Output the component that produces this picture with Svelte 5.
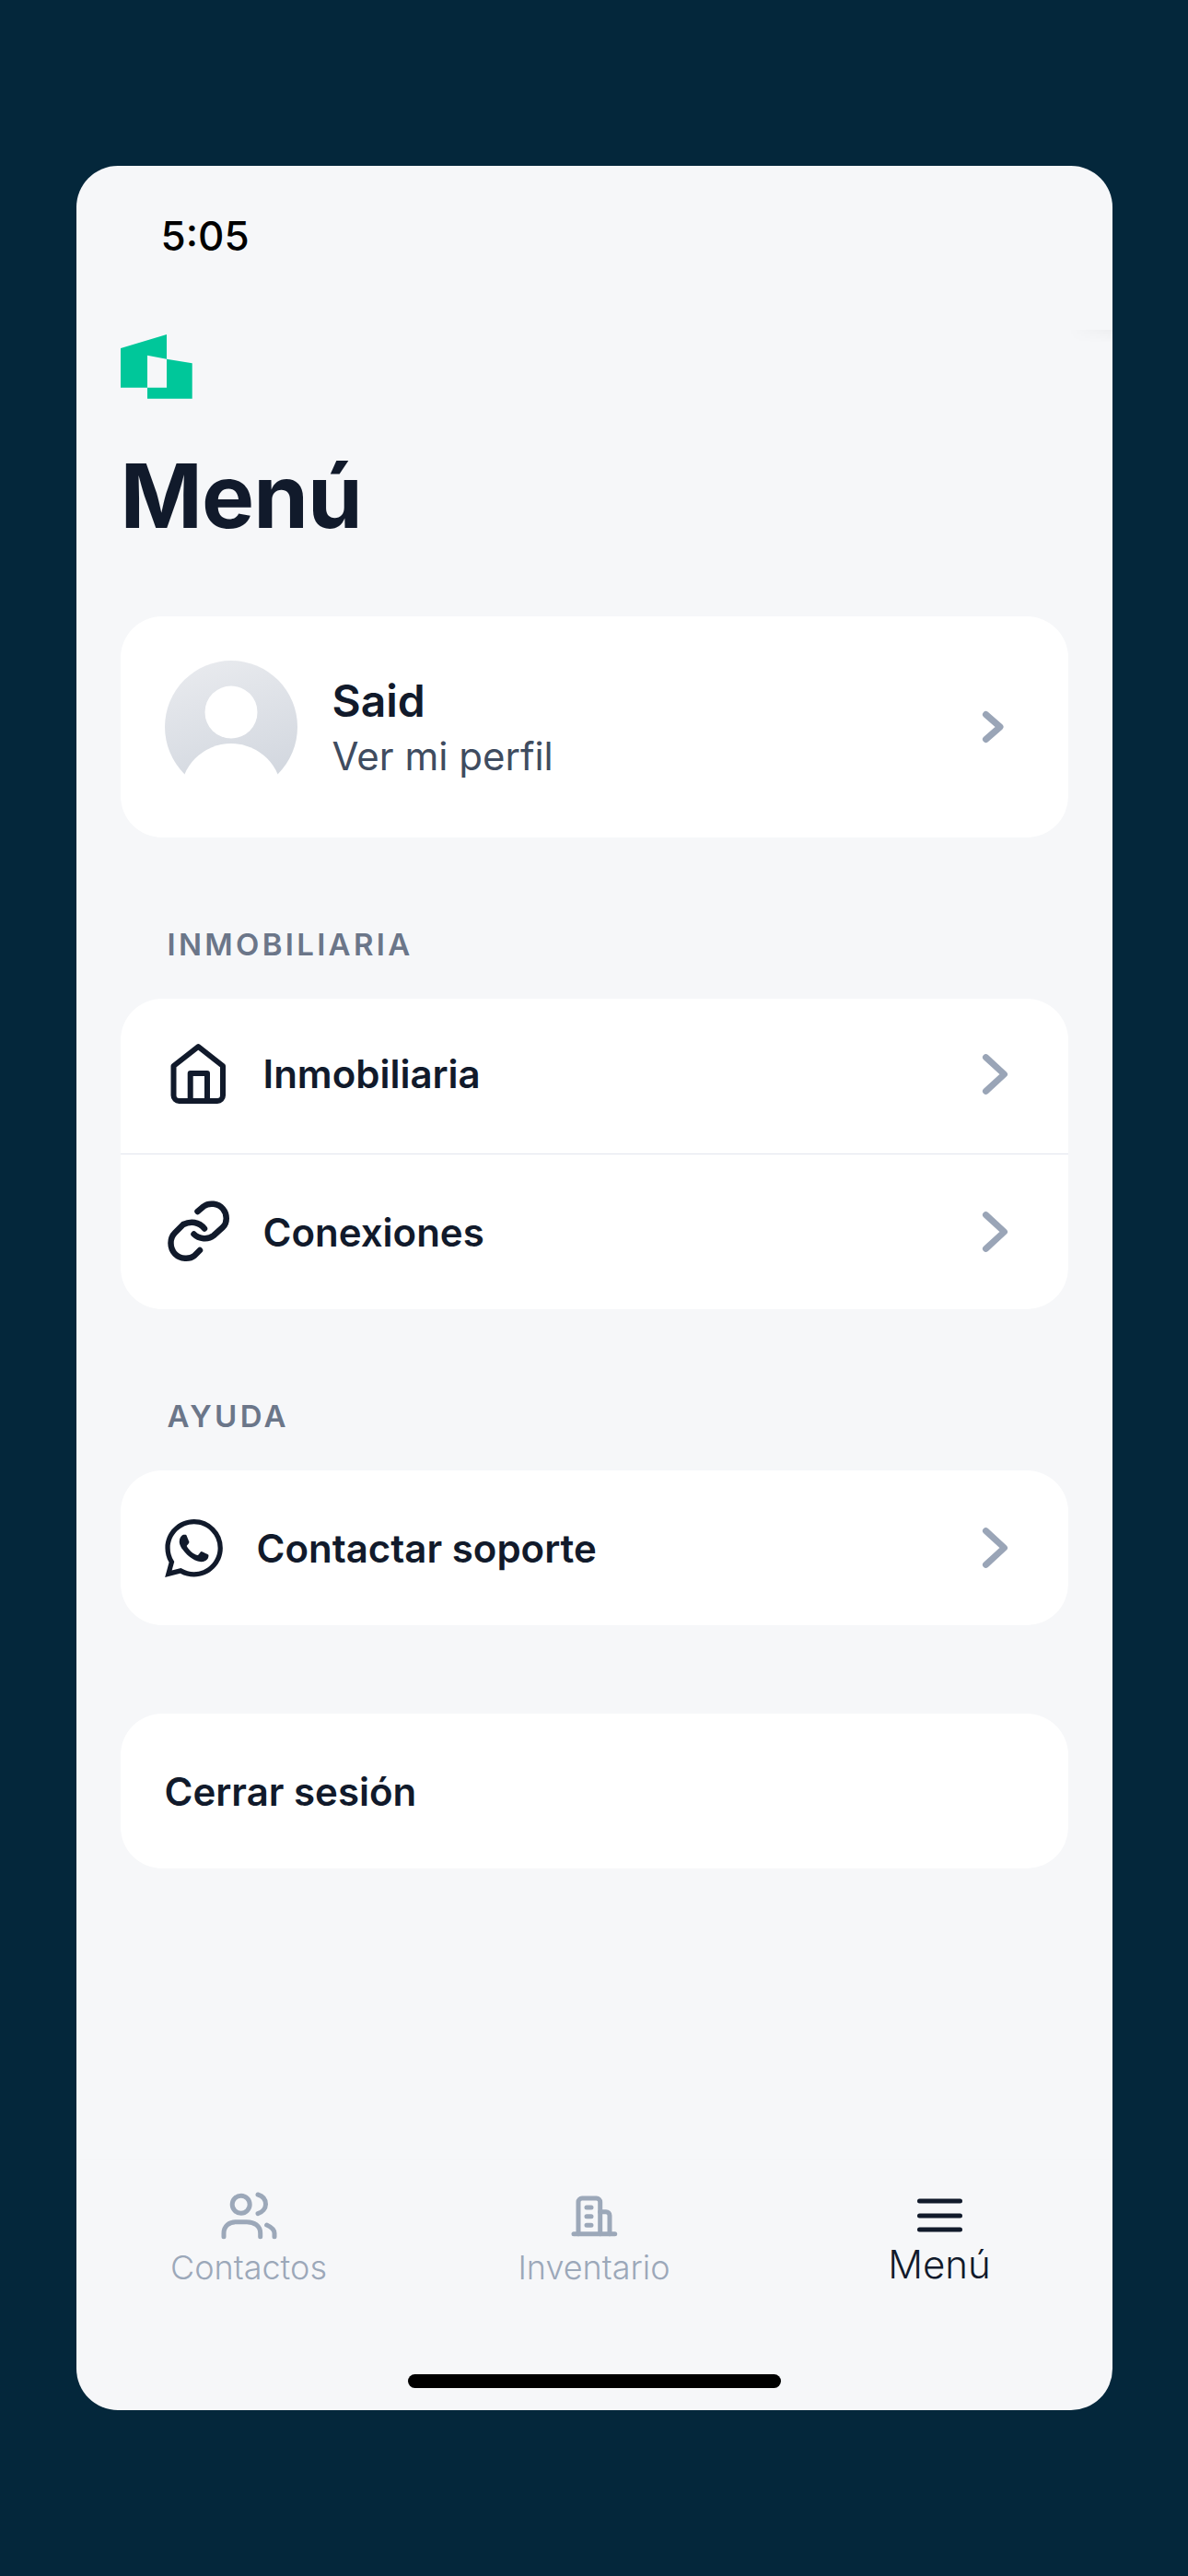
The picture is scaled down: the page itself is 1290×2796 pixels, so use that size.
<script>
  const wa = "M17.472 14.382c-.297-.149-1.758-.867-2.03-.967-.273-.099-.471-.148-.67.15-.197.297-.767.966-.94 1.164-.173.199-.347.223-.644.075-.297-.15-1.255-.463-2.39-1.475-.883-.788-1.48-1.761-1.653-2.059-.173-.297-.018-.458.13-.606.134-.133.298-.347.446-.52.149-.174.198-.298.298-.497.099-.198.05-.371-.025-.52-.075-.149-.669-1.612-.916-2.207-.242-.579-.487-.5-.669-.51-.173-.008-.371-.01-.57-.01-.198 0-.52.074-.792.372-.272.297-1.04 1.016-1.04 2.479 0 1.462 1.065 2.875 1.213 3.074.149.198 2.096 3.2 5.077 4.487.709.306 1.262.489 1.694.625.712.227 1.36.195 1.871.118.571-.085 1.758-.719 2.006-1.413.248-.694.248-1.289.173-1.413-.074-.124-.272-.198-.57-.347m-5.421 7.403h-.004a9.87 9.87 0 01-5.031-1.378l-.361-.214-3.741.982.998-3.648-.235-.374a9.86 9.86 0 01-1.51-5.26c.001-5.45 4.436-9.884 9.888-9.884 2.64 0 5.122 1.03 6.988 2.898a9.825 9.825 0 012.893 6.994c-.003 5.45-4.437 9.884-9.885 9.884m8.413-18.297A11.815 11.815 0 0012.05 0C5.495 0 .16 5.335.157 11.892c0 2.096.547 4.142 1.588 5.945L.057 24l6.305-1.654a11.882 11.882 0 005.683 1.448h.005c6.554 0 11.89-5.335 11.893-11.893a11.821 11.821 0 00-3.48-8.413z";
</script>

{#snippet chevron()}
  <svg class="chev" viewBox="0 0 40 60" fill="none" stroke="currentColor" stroke-width="7" stroke-linecap="round" stroke-linejoin="round"><path d="M9.5 11.7 29.5 30 9.5 48.3" /></svg>
{/snippet}

<div class="phone">
  <div class="fade"></div>
  <div class="status">5:05</div>

  <svg class="logo" viewBox="0 0 78 70" fill="#00c79a">
    <polygon points="0,15 50,0 50,26.7 29,22.7 29,57.7 0,57.7" />
    <polygon points="50,26.7 77.7,31.3 77.7,69.7 29,69.7 29,57.7 50,57.7" />
  </svg>

  <h1>Menú</h1>

  <section class="card profile">
    <svg class="avatar" viewBox="0 0 144 144">
      <defs>
        <linearGradient id="av" x1="0.3" y1="0" x2="0.6" y2="1">
          <stop offset="0" stop-color="#e8eaee" />
          <stop offset="1" stop-color="#d1d6de" />
        </linearGradient>
      </defs>
      <circle cx="72" cy="72" r="72" fill="url(#av)" />
      <circle cx="72" cy="56" r="28.5" fill="#fff" />
      <circle cx="72" cy="145" r="55" fill="#fff" />
    </svg>
    <div class="who">
      <div class="name">Said</div>
      <div class="sub">Ver mi perfil</div>
    </div>
    <svg class="chev small" viewBox="0 0 40 60" fill="none" stroke="currentColor" stroke-width="7" stroke-linecap="round" stroke-linejoin="round"><path d="M9.5 16.5 25 30 9.5 43.5" /></svg>
  </section>

  <h2>INMOBILIARIA</h2>
  <section class="card">
    <div class="row first">
      <svg class="ico" viewBox="0 0 72 72" fill="none" stroke="#111a2b" stroke-width="6" stroke-linecap="round" stroke-linejoin="round">
        <path d="M9.5 27 36.3 6 63 27V59a6 6 0 0 1-6 6H15.5a6 6 0 0 1-6-6Z" />
        <path d="M27.7 65V35H46V65" />
      </svg>
      <span class="label">Inmobiliaria</span>
      {@render chevron()}
    </div>
    <div class="row">
      <svg class="ico" viewBox="18 21 72 72" fill="none" stroke="#111a2b" stroke-width="6.5" stroke-linecap="round" stroke-linejoin="round">
        <path d="M53.5 35 60 29.5C66 25 76 26 81 32 86 38 86 47 81 52L71 61C65 66 55 65 49.5 59.5" />
        <path d="M61 53.5C55 46 46 45 38 49L29 58C23 64 23 74 29 81 35 87 45 87 50 83L56 77" />
      </svg>
      <span class="label">Conexiones</span>
      {@render chevron()}
    </div>
  </section>

  <h2>AYUDA</h2>
  <section class="card">
    <div class="row">
      <svg class="wa" viewBox="0 0 24 24" fill="#111a2b"><path d={wa} /></svg>
      <span class="label">Contactar soporte</span>
      {@render chevron()}
    </div>
  </section>

  <section class="card logout">
    <div class="row plain"><span class="label">Cerrar sesión</span></div>
  </section>

  <nav>
    <div class="tabs">
      <div class="tab">
        <svg viewBox="0 0 64 64" fill="none" stroke="currentColor" stroke-width="5" stroke-linecap="round" stroke-linejoin="round">
          <circle cx="23.7" cy="18.7" r="9.5" />
          <path d="M42 8C47 9.5 50.5 13 50.5 18.5 50.5 23 47 27 42 28.7" />
          <path d="M5 53.7V50C5 42 11 37.7 18 37.7H30C38 37.7 44.7 42 44.7 50V53.7" />
          <path d="M51.6 41C56 43 60 46 60 50V53.7" />
        </svg>
        <span>Contactos</span>
      </div>
      <div class="tab">
        <svg viewBox="0 0 64 64" fill="none" stroke="currentColor" stroke-width="5" stroke-linecap="round" stroke-linejoin="round">
          <path d="M15 50.7V16a4 4 0 0 1 4-4H34.7a4 4 0 0 1 4 4V50.7" />
          <path d="M38.7 26.7H45a4 4 0 0 1 4 4V50.7" />
          <path d="M10 50.7H54.7" />
          <path d="M24 22H29M24 31.7H29M24 41.3H29" />
        </svg>
        <span>Inventario</span>
      </div>
      <div class="tab active">
        <svg viewBox="0 0 64 64" fill="none" stroke="currentColor" stroke-width="5" stroke-linecap="round">
          <path d="M10.5 15H54.5M10.5 31H54.5M10.5 46H54.5" />
        </svg>
        <span>Menú</span>
      </div>
    </div>
    <div class="home"></div>
  </nav>
</div>

<style>
  :global(body) {
    margin: 0;
    background: #04273b;
    font-family: Inter, "Noto Sans", sans-serif;
  }
  .phone {
    position: relative;
    box-sizing: border-box;
    width: 1125px;
    height: 2436px;
    margin: 180px auto;
    background: #f6f7f9;
    border-radius: 45px;
    overflow: hidden;
    display: flex;
    flex-direction: column;
    color: #111a2b;
  }
  .fade {
    position: absolute;
    top: 178px;
    right: 0;
    width: 48px;
    height: 14px;
    background: linear-gradient(to bottom, rgba(0, 0, 0, 0.035), transparent);
    -webkit-mask-image: linear-gradient(to right, transparent, #000);
    mask-image: linear-gradient(to right, transparent, #000);
  }
  .status {
    height: 183px;
    box-sizing: border-box;
    padding: 50px 0 0 92px;
    font-size: 44px;
    line-height: 53px;
    font-weight: 500;
    color: #000;
  }
  .logo {
    width: 78px;
    height: 70px;
    margin-left: 48.5px;
    flex: none;
  }
  h1 {
    margin: 47px 0 73px 48px;
    font-size: 96px;
    line-height: 116px;
    font-weight: 700;
    letter-spacing: -1px;
  }
  h2 {
    margin: 96px 0 39px 99px;
    font-size: 33px;
    line-height: 40px;
    font-weight: 600;
    letter-spacing: 3.3px;
    color: #6b7689;
  }
  .card {
    flex: none;
    margin: 0 48px;
    background: #fff;
    border-radius: 45px;
    overflow: hidden;
  }
  .profile {
    height: 240px;
    display: flex;
    align-items: center;
    padding: 0 59px 0 48px;
  }
  .avatar {
    width: 144px;
    height: 144px;
    flex: none;
  }
  .who {
    flex: 1;
    margin-left: 38px;
  }
  .name {
    font-size: 48px;
    line-height: 58px;
    font-weight: 600;
  }
  .sub {
    margin-top: 5px;
    font-size: 42px;
    line-height: 51px;
    color: #3f4c60;
  }
  .row {
    height: 168px;
    display: flex;
    align-items: center;
    padding: 0 59px 0 48px;
  }
  .row.first {
    box-sizing: border-box;
    height: 169px;
    padding-bottom: 5px;
    border-bottom: 1px solid #e2e5ee;
  }
  .ico {
    width: 72px;
    height: 72px;
    flex: none;
    margin-right: 35px;
  }
  .wa {
    width: 63px;
    height: 63px;
    flex: none;
    margin-right: 37px;
  }
  .label {
    flex: 1;
    font-size: 42px;
    font-weight: 600;
  }
  .chev {
    width: 40px;
    height: 60px;
    flex: none;
    color: #9aa5b7;
  }
  .logout {
    margin-top: 96px;
  }
  nav {
    margin-top: auto;
    height: 271px;
    box-sizing: border-box;
    padding-top: 29px;
    display: flex;
    flex-direction: column;
    box-shadow: 0 -2px 6px rgba(0, 0, 0, 0.006);
  }
  .tabs {
    display: grid;
    grid-template-columns: repeat(3, 1fr);
  }
  .tab {
    display: flex;
    flex-direction: column;
    align-items: center;
    color: #9ca8b9;
    font-size: 36px;
    line-height: 44px;
    font-weight: 300;
  }
  .tab svg {
    width: 64px;
    height: 64px;
    margin-bottom: 1px;
  }
  .tab.active {
    color: #111a2b;
    font-size: 42px;
    line-height: 50px;
  }
  .tab.active svg {
    margin-bottom: -5px;
  }
  .home {
    width: 405px;
    height: 15px;
    margin: auto auto 24px;
    border-radius: 8px;
    background: #000;
  }
</style>
